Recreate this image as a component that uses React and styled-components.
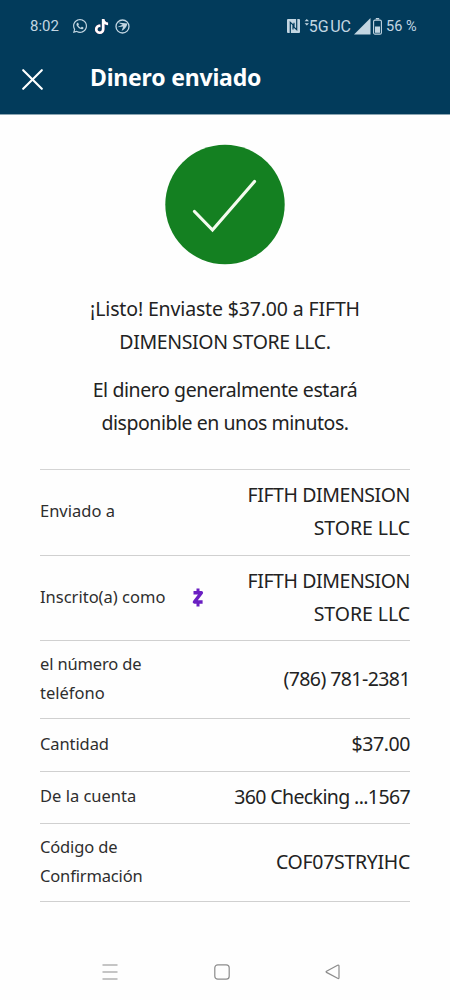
import React from 'react';
import styled, { createGlobalStyle } from 'styled-components';
import { FaWhatsapp, FaTiktok } from 'react-icons/fa';

const GlobalStyle = createGlobalStyle`
    * {
        box-sizing: border-box;
    }

    body {
        margin: 0;
        background: #fefefe;
        color: #222;
        font-family: "Noto Sans", "Open Sans", sans-serif;
    }

    svg {
        display: block;
        flex: none;
    }
`;

const Screen = styled.div`
    width: 450px;
    height: 1000px;
    display: flex;
    flex-direction: column;
    overflow: hidden;
`;

const TopBar = styled.header`
    height: 115px;
    background-color: #023b5b;
    border-bottom: 1px solid #8ba5b2;
    color: #fff;
`;

const StatusBar = styled.div`
    height: 52px;
    padding: 0 33px 0 30px;
    display: flex;
    justify-content: space-between;
    align-items: center;
    color: #c3d6e2;
    font-family: Roboto, sans-serif;
    font-size: 15px;
`;

const StatusGroup = styled.div`
    display: flex;
    align-items: center;
`;

const Clock = styled.span`
    width: 42px;
    white-space: nowrap;
`;

const AppIcons = styled.div`
    display: flex;
    align-items: center;
    gap: 6px;
`;

const TikTokIcon = styled(FaTiktok)`
    color: #fff;
    filter: drop-shadow(0.6px 0.5px 0 #d8547c);
`;

const Network = styled.span`
    margin: 0 3px 0 -1px;
    font-size: 16px;
    white-space: nowrap;
    word-spacing: -2.5px;
`;

const Battery = styled.span`
    width: 31px;
    margin-left: 4px;
    font-size: 14.5px;
    white-space: nowrap;
`;

const TitleRow = styled.div`
    height: 52px;
    padding-left: 22px;
    display: flex;
    align-items: center;
`;

const CloseButton = styled.button`
    width: 21px;
    height: 21px;
    margin: 3px 47px 0 0;
    padding: 0;
    border: 0;
    background: none;
    color: inherit;
`;

const Title = styled.h1`
    margin: 0 0 2px;
    font-size: 23px;
    font-weight: 700;
    line-height: 32px;
    white-space: nowrap;
    letter-spacing: -0.2px;
`;

const Main = styled.main`
    flex: 1;
    padding: 29px 40px 0;
    display: flex;
    flex-direction: column;
`;

const SuccessMark = styled.div`
    height: 121px;
    display: flex;
    justify-content: center;
    padding-right: 1px;
`;

const Message = styled.p`
    margin: ${(p) => p.$top}px 0 0;
    font-size: 19.5px;
    line-height: 33px;
    text-align: center;
`;

const Line = styled.span`
    display: block;
    white-space: nowrap;
    letter-spacing: ${(p) => p.$track || 0}px;
`;

const Details = styled.dl`
    margin: 30px 0 0;
    border-top: 1px solid #d4d4d4;
`;

const Row = styled.div`
    height: ${(p) => p.$height}px;
    padding-bottom: 2px;
    display: flex;
    align-items: center;
    justify-content: space-between;
    border-bottom: 1px solid #d0d0d0;
`;

const Label = styled.dt`
    padding-bottom: 1px;
    font-size: 16.5px;
    line-height: 29px;
    color: #2e2e2e;
`;

const Value = styled.dd`
    margin: 0;
    font-size: 19.5px;
    line-height: 33px;
    text-align: right;
`;

const ZelleSlot = styled.div`
    margin: 2px auto 0 27px;
`;

const NavBar = styled.nav`
    height: 56px;
    padding: 0 110px 0 102px;
    display: flex;
    align-items: center;
    justify-content: space-between;
`;

// each line of text comes with its letter spacing
const rows = [
    { label: [['Enviado a', 0]], value: [['FIFTH DIMENSION', -0.42], ['STORE LLC', -0.05]], height: 85.5 },
    { label: [['Inscrito(a) como', 0]], value: [['FIFTH DIMENSION', -0.42], ['STORE LLC', -0.05]], height: 85.5, zelle: true },
    { label: [['el número de', -0.15], ['teléfono', 0]], value: [['(786) 781-2381', -0.57]], height: 78 },
    { label: [['Cantidad', -0.1]], value: [['$37.00', -0.4]], height: 52.5 },
    { label: [['De la cuenta', 0]], value: [['360 Checking ...1567', -0.62]], height: 52.5 },
    { label: [['Código de', -0.15], ['Confirmación', -0.15]], value: [['COF07STRYIHC', -0.3]], height: 78 },
];

const Lines = ({ items }) => items.map(([text, track]) => (
    <Line key={text} $track={track}>{text}</Line>
));

const LocationIcon = () => (
    <svg width="15" height="15" viewBox="0 0 15 15" fill="none" stroke="currentColor">
        <circle cx="7.5" cy="7.5" r="6.5" strokeWidth="1.3" />
        <path d="M2.6 3.6 12.4 4.4Q11.6 9 6.6 12L8.2 7.6 2 8.2 7.6 5.8Z" fill="currentColor" stroke="none" />
    </svg>
);

const NfcIcon = () => (
    <svg width="13" height="14" viewBox="0 0 13 14">
        <rect width="13" height="14" rx="1" fill="#c3d6e2" />
        <path d="M3.3 14V3.4L6 5.8V10.5M9.7 0V10.6L7 8.2V3.8" fill="none" stroke="#023b5b" strokeWidth="1.2" />
    </svg>
);

const DataArrows = () => (
    <svg width="10" height="16" viewBox="0 0 10 16" fill="currentColor">
        <path d="M4.6 3.3 6.8 1 9 3.3ZM4.6 5.3H9L6.8 7.6Z" />
    </svg>
);

const SignalIcon = () => (
    <svg width="17" height="17" viewBox="0 0 17 17" fill="currentColor">
        <path d="M0 16.5 16.5 0V16.5Z" />
    </svg>
);

const BatteryIcon = () => (
    <svg width="11" height="17" viewBox="-2 0 11 17" fill="none" stroke="currentColor">
        <path d="M2.8 0.7H6.2" strokeWidth="1.4" />
        <rect x="0.6" y="2.1" width="7.8" height="14" rx="1.4" strokeWidth="1.1" />
        <rect x="2" y="8.5" width="5" height="6.3" fill="currentColor" stroke="none" />
    </svg>
);

const ZelleIcon = () => (
    <svg width="12" height="19" viewBox="0 0 12 19" fill="none" stroke="#6a1fc2">
        <path d="M1.5 4.8H9.4L2.4 14H10.6" strokeWidth="3.4" strokeLinejoin="round" />
        <path d="M6 0.5V4M6 15V18.5" strokeWidth="3" />
    </svg>
);

const App = () => {
    return (
        <>
            <GlobalStyle />
            <Screen>
                <TopBar>
                    <StatusBar>
                        <StatusGroup>
                            <Clock>8:02</Clock>
                            <AppIcons>
                                <FaWhatsapp size={16} />
                                <TikTokIcon size={15} />
                                <LocationIcon />
                            </AppIcons>
                        </StatusGroup>
                        <StatusGroup>
                            <NfcIcon />
                            <DataArrows />
                            <Network>5G UC</Network>
                            <SignalIcon />
                            <BatteryIcon />
                            <Battery>56 %</Battery>
                        </StatusGroup>
                    </StatusBar>
                    <TitleRow>
                        <CloseButton aria-label="Cerrar">
                            <svg width="21" height="21" viewBox="0 0 21 21" stroke="currentColor" strokeWidth="2.1" strokeLinecap="round">
                                <path d="M1.2 1.2 19.8 19.8M19.8 1.2 1.2 19.8" />
                            </svg>
                        </CloseButton>
                        <Title>Dinero enviado</Title>
                    </TitleRow>
                </TopBar>

                <Main>
                    <SuccessMark>
                        <svg width="120" height="121" viewBox="0 0 120 121">
                            <circle cx="60" cy="60.5" r="59.7" fill="#148021" />
                            <path d="M29.5 67.5 47.5 86 89.5 37.5" fill="none" stroke="#f4fbef" strokeWidth="3.2" strokeLinecap="round" />
                        </svg>
                    </SuccessMark>
                    <Message $top={27}>
                        <Lines items={[['¡Listo! Enviaste $37.00 a FIFTH', -0.15], ['DIMENSION STORE LLC.', -0.37]]} />
                    </Message>
                    <Message $top={15}>
                        <Lines items={[['El dinero generalmente estará', -0.41], ['disponible en unos minutos.', -0.46]]} />
                    </Message>

                    <Details>
                        {rows.map((row, i) => (
                            <Row key={i} $height={row.height}>
                                <Label><Lines items={row.label} /></Label>
                                {row.zelle && <ZelleSlot><ZelleIcon /></ZelleSlot>}
                                <Value><Lines items={row.value} /></Value>
                            </Row>
                        ))}
                    </Details>
                </Main>

                <NavBar>
                    <svg width="16" height="16" viewBox="0 0 16 16" stroke="#8c8c8c" strokeWidth="1.2">
                        <path d="M0.5 1H15.5M0.5 8H15.5M0.5 15H15.5" />
                    </svg>
                    <svg width="16" height="16" viewBox="0 0 16 16" fill="none" stroke="#8c8c8c" strokeWidth="1.2">
                        <rect x="0.8" y="0.8" width="14.4" height="14.4" rx="3" />
                    </svg>
                    <svg width="15" height="16" viewBox="0 0 15 16" fill="none" stroke="#8c8c8c" strokeWidth="1.2" strokeLinejoin="round">
                        <path d="M1.5 7.2 12.6 1.2Q14 0.7 14 2V13.6Q14 15 12.6 14.3L1.5 8.4Q0.6 7.8 1.5 7.2Z" />
                    </svg>
                </NavBar>
            </Screen>
        </>
    );
};

export default App;
